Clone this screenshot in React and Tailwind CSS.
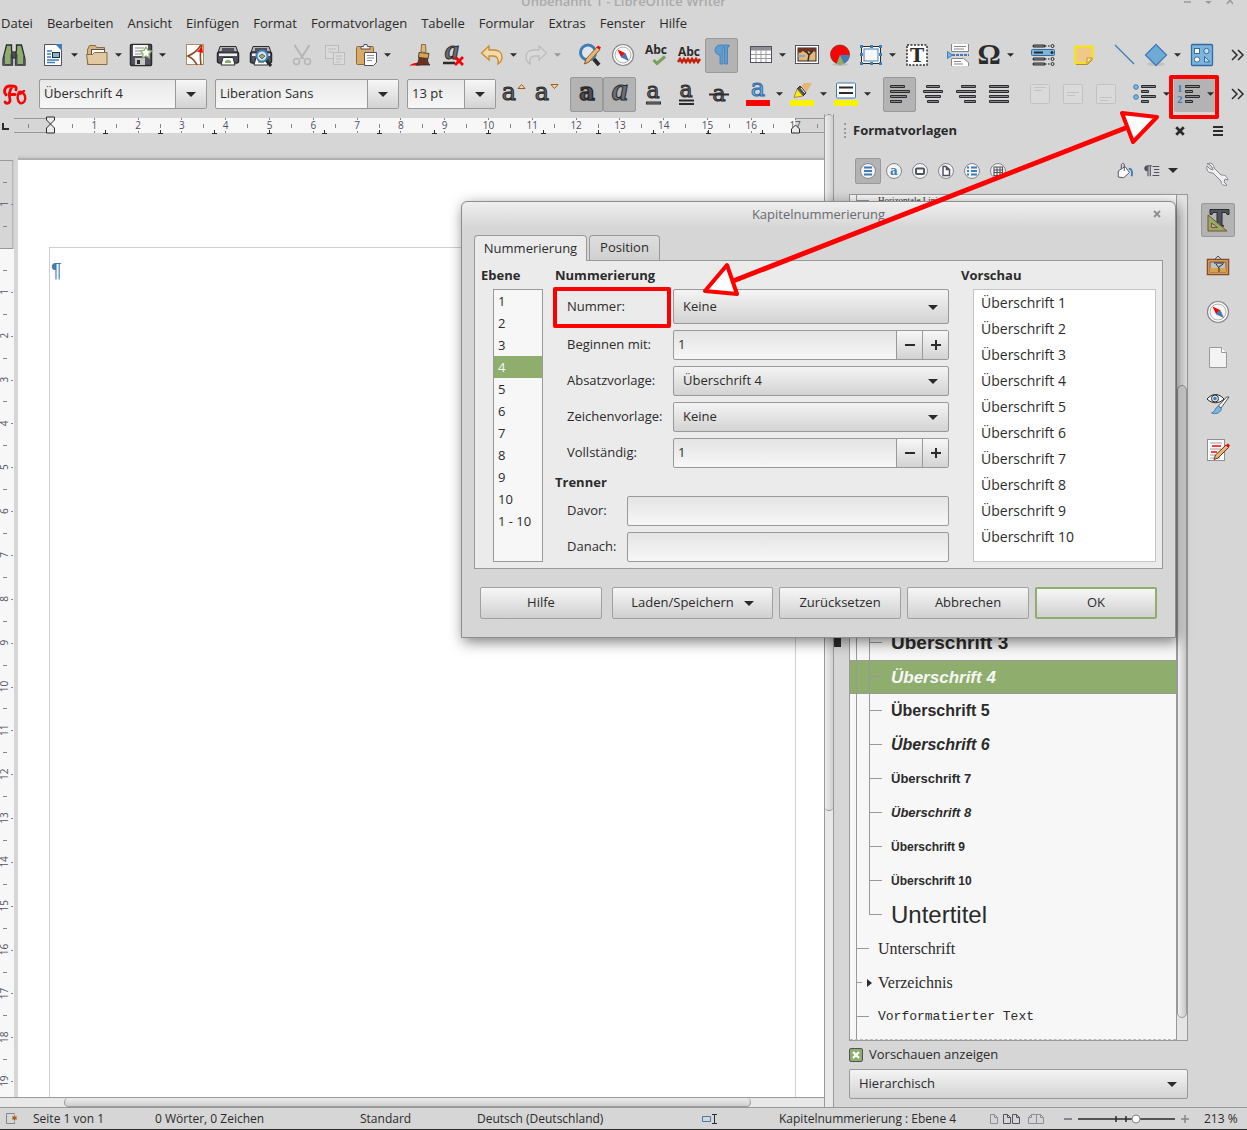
import React, { useState } from 'react'
import clsx from 'clsx'

const MENU = ['Datei', 'Bearbeiten', 'Ansicht', 'Einfügen', 'Format', 'Formatvorlagen', 'Tabelle', 'Formular', 'Extras', 'Fenster', 'Hilfe']

const STANDARD_BAR = [
  { icon: 'binoculars', label: 'Suchen' },
  'sep',
  { icon: 'newDoc', label: 'Neu', menu: true },
  { icon: 'folder', label: 'Öffnen', menu: true },
  { icon: 'save', label: 'Speichern', menu: true },
  'sep',
  { icon: 'pdf', label: 'Als PDF exportieren' },
  { icon: 'print', label: 'Drucken' },
  { icon: 'printPreview', label: 'Druckvorschau' },
  'sep',
  { icon: 'cut', label: 'Ausschneiden' },
  { icon: 'copy', label: 'Kopieren' },
  { icon: 'paste', label: 'Einfügen', menu: true },
  'sep',
  { icon: 'brush', label: 'Format übertragen' },
  { icon: 'clearFormat', label: 'Direkte Formatierung löschen' },
  'sep',
  { icon: 'undo', label: 'Rückgängig', menu: true },
  { icon: 'redo', label: 'Wiederherstellen', menu: true, disabled: true },
  'sep',
  { icon: 'find', label: 'Suchen und Ersetzen' },
  { icon: 'compass', label: 'Navigator' },
  { icon: 'spell', label: 'Rechtschreibung' },
  { icon: 'autoSpell', label: 'Automatische Rechtschreibprüfung' },
  { icon: 'pilcrow', label: 'Formatierungszeichen', pressed: true },
  'sep',
  { icon: 'table', label: 'Tabelle', menu: true },
  { icon: 'image', label: 'Bild' },
  { icon: 'chart', label: 'Diagramm' },
  { icon: 'frame', label: 'Rahmen', menu: true },
  { icon: 'textBox', label: 'Textfeld' },
  'sep',
  { icon: 'pageBreak', label: 'Seitenumbruch' },
  { icon: 'omega', label: 'Sonderzeichen', menu: true },
  'sep',
  { icon: 'field', label: 'Feldbefehl' },
  'sep',
  { icon: 'note', label: 'Kommentar' },
  'sep',
  { icon: 'line', label: 'Linie' },
  { icon: 'diamond', label: 'Standardformen', menu: true },
  { icon: 'shapes', label: 'Zeichenfunktionen' },
]

const FORMAT_BAR = [
  { icon: 'grow', label: 'Schrift vergrößern' },
  { icon: 'shrink', label: 'Schrift verkleinern' },
  'sep',
  { icon: 'bold', label: 'Fett', pressed: true },
  { icon: 'italic', label: 'Kursiv', pressed: true },
  { icon: 'underline', label: 'Unterstrichen' },
  { icon: 'doubleUnderline', label: 'Doppelt unterstrichen' },
  { icon: 'strike', label: 'Durchgestrichen' },
  'sep',
  { icon: 'fontColor', label: 'Zeichenfarbe', menu: true },
  { icon: 'highlight', label: 'Hervorhebungsfarbe', menu: true },
  { icon: 'paraColor', label: 'Absatzhintergrund', menu: true },
  'sep',
  { icon: 'alignLeft', label: 'Linksbündig', pressed: true },
  { icon: 'alignCenter', label: 'Zentriert' },
  { icon: 'alignRight', label: 'Rechtsbündig' },
  { icon: 'justify', label: 'Blocksatz' },
  'sep',
  { icon: 'top', label: 'Oben', disabled: true },
  { icon: 'middle', label: 'Mitte', disabled: true },
  { icon: 'bottom', label: 'Unten', disabled: true },
  'sep',
  { icon: 'bullets', label: 'Aufzählung', menu: true },
  { icon: 'numbering', label: 'Nummerierung', menu: true, pressed: true },
]

const ink = '#2b2b2b'
const slate = '#50525f'
const serif = 'DejaVu Serif, serif'

const printer = (
  <g>
    <path d="M4 3.500h16l2 6H2z" fill="#b5b5b9" stroke={ink} />
    <rect x="6" y="5" width="12" height="3" fill={slate} />
    <rect x="1.500" y="9" width="21" height="11" rx="2" fill="#50525f" stroke={ink} strokeWidth="1.500" />
    <rect x="3" y="10.500" width="18" height="2.500" fill="#f0f0f0" />
    <path d="M7 14.500h10l2 7.500H5z" fill="#fff" stroke={ink} />
    <path d="M9 18l3-1.500 3 1.500v2H9z" fill="#8fae6e" />
  </g>
)

const bars = (rows) => rows.map(([x, w], i) => (
  <g key={i}>
    <rect x={x} y={3 + i * 5} width={w} height="3" rx="1" fill={ink} />
    <rect x={x + 1} y={4 + i * 5} width={w - 2} height="1" fill="#85858d" />
  </g>
))

const letterA = (props) => (
  <text x="12" y="18" textAnchor="middle" fontFamily={serif} fontSize="22" fill="#6c6e7a" stroke={ink} strokeWidth="1" {...props}>a</text>
)

const compass = (
  <g>
    <circle cx="12" cy="12" r="10.500" fill="#fff" stroke="#85858d" strokeWidth="1.200" />
    <circle cx="12" cy="12" r="8" fill="#f7f7f7" stroke="#b0b0b0" />
    <path d="M6.500 6.500l7.500 3.500-4 4z" fill="#f40606" />
    <path d="M17.500 17.500l-7.500-3.500 4-4z" fill="#3f7cb8" stroke={slate} strokeWidth="0.500" />
  </g>
)

const disabledBox = (y, w) => (
  <g fill="none" stroke="#c2c2c2">
    <rect x="2.500" y="2.500" width="19" height="19" rx="1" fill="#dadada" />
    <path d={`M6 ${y}.5h${w}M6 ${y + 3}.5h${w - 4}`} />
  </g>
)

const ICONS = {
  binoculars: (
    <g stroke={ink}>
      <path d="M4.500 2h5v5l1 4v11H1V16z" fill="#8fae6e" strokeWidth="1.300" />
      <path d="M19.500 2h-5v5l-1 4v11H23V16z" fill="#8fae6e" strokeWidth="1.300" />
      <path d="M1 17l2-6v11H1zM23 17l-2-6v11h2zM8.500 11h2v11h-2zM13.500 11h2v11h-2z" fill={slate} stroke="none" />
      <rect x="10" y="9" width="4" height="6" fill={slate} />
    </g>
  ),
  newDoc: (
    <g>
      <path d="M3.500 1.500h12l5 5v16h-17z" fill="#fff" stroke={slate} />
      <path d="M14 1h7v7z" fill="#3f7cb8" />
      <path d="M6 8h5M6 11h4M6 14h4M6 17h12M6 19.500h8" stroke="#3f7cb8" strokeWidth="1.500" />
      <rect x="11.500" y="9.500" width="7" height="5" fill="#7fb5da" stroke={ink} />
    </g>
  ),
  folder: (
    <g stroke="#8a6a45">
      <path d="M2.500 6.500l2-4h6l1 2h8v17h-17z" fill="#d9b27a" />
      <rect x="6.500" y="6.500" width="13" height="8" fill="#fff" stroke={slate} />
      <path d="M1.500 11.500h6l2-2h12.500v12h-19z" fill="#e3c9a2" />
    </g>
  ),
  save: (
    <g>
      <rect x="1.500" y="1.500" width="21" height="21" rx="1" fill="#50525f" stroke={ink} strokeWidth="1.500" />
      <rect x="4" y="2" width="15" height="11" fill="#f7f7f7" />
      <path d="M6 5h9M6 8h8M6 11h7" stroke="#8e8e96" />
      <rect x="6" y="15" width="10" height="7" fill="#c6c6ca" />
      <rect x="8" y="17" width="3" height="4" fill={ink} />
      <path d="M17 4l2 3.500 3.500.5-2.500 3 .5 4-3.500-2-3.500 2 .5-4-2.500-3 3.500-.5z" fill="#fff" stroke="#8fae6e" strokeWidth="1.300" />
    </g>
  ),
  pdf: (
    <g fill="none">
      <rect x="3.500" y="1.500" width="17" height="20" fill="#fff" stroke="#b98a60" />
      <path d="M18 2c-3 5-8 9-13 11 4 2 7 5 9 9" stroke="#8a4a25" strokeWidth="1.600" />
      <path d="M19 2c-2 6-2 13-1 20" stroke="#8a4a25" strokeWidth="1.600" />
      <path d="M14 9c2-2 4-4 5-7l1 8c-2-1-4-1-6-1z" fill="#f40606" />
    </g>
  ),
  print: printer,
  printPreview: (
    <g>
      {printer}
      <path d="M17 17l5 6" stroke={ink} strokeWidth="3" />
      <circle cx="13" cy="13" r="5.500" fill="#dbe7f0" stroke="#3f7cb8" strokeWidth="2" />
      <path d="M10 13l3-2 3 2-3 3z" fill="#8fae6e" stroke={ink} strokeWidth="0.600" />
    </g>
  ),
  cut: (
    <g fill="none" stroke="#b5b5b5" strokeWidth="1.500">
      <path d="M4.500 2l9 14M19.500 2l-9 14" strokeWidth="2" />
      <circle cx="6.500" cy="18.500" r="3" />
      <circle cx="17.500" cy="18.500" r="3" />
    </g>
  ),
  copy: (
    <g fill="#dadada" stroke="#bcbcbc">
      <rect x="2.500" y="2.500" width="13" height="13" />
      <rect x="10.500" y="9.500" width="11" height="12" />
      <path d="M5 6h8M5 9h5M13 13h6M13 16h6M13 19h4" />
    </g>
  ),
  paste: (
    <g>
      <rect x="2.500" y="3.500" width="17" height="18" rx="1" fill="#dca963" stroke="#8a6a45" />
      <path d="M7 6V3.500h2.500L10 1.500h3l.5 2H16V6z" fill="#f0f0f0" stroke={slate} />
      <path d="M10.500 9.500h12v10l-3 3h-9z" fill="#fff" stroke={slate} />
      <path d="M13 12.500h7M13 15h7M13 17.500h5" stroke="#8e8e96" />
    </g>
  ),
  brush: (
    <g>
      <path d="M1 22.500c5-3 8-3 10-2.500h4l-3 2.500z" fill="#f40606" />
      <path d="M11 14l9 1c-1 3 0 5 2 7H8c2-2 3-5 3-8z" fill="#6e3220" stroke={ink} strokeWidth="0.800" />
      <path d="M11 9.500l10 1-1 5-9.500-1z" fill="#d9a24e" stroke={ink} strokeWidth="0.800" />
      <path d="M13.500 1.500h4l.5 8-5-.5z" fill="#e2b777" stroke="#8a6a45" />
    </g>
  ),
  clearFormat: (
    <g>
      {letterA({ fontStyle: 'italic', fontFamily: 'Liberation Serif, serif', fontWeight: 'bold', fontSize: 28, x: 11, y: 16 })}
      <path d="M2 20h12" stroke={ink} strokeWidth="2.500" />
      <path d="M14 14l8 8M22 14l-8 8" stroke="#f40606" strokeWidth="2.800" />
    </g>
  ),
  undo: <path d="M9 3v4h5c5 0 8 3 8 7 0 3-1 5-4 7 1-5-1-8-5-8H9v4L1.500 10z" fill="#f3d9ac" stroke="#c98a2c" strokeWidth="1.300" />,
  redo: <path d="M15 3v4h-5c-5 0-8 3-8 7 0 3 1 5 4 7-1-5 1-8 5-8h4v4l7.500-7z" fill="#d9d9d9" stroke="#bcbcbc" strokeWidth="1.300" />,
  find: (
    <g>
      <path d="M15 15l6 7" stroke={ink} strokeWidth="4" />
      <circle cx="10" cy="9.500" r="7.500" fill="#dfe6ec" stroke="#3f7cb8" strokeWidth="3" />
      <path d="M19 4l3 2.500L11 19l-4.500 2L8 16z" fill="#e2b777" stroke="#8a5a2a" />
      <path d="M18.500 4.500l1.500-2 3 2-1.500 2z" fill="#f40606" />
    </g>
  ),
  compass,
  spell: (
    <g>
      <text x="12" y="11" textAnchor="middle" fontFamily="Open Sans, sans-serif" fontSize="12" fontWeight="bold" fill={ink}>Abc</text>
      <path d="M9.500 17l3.500 3.500 8-7" fill="none" stroke="#7a9f57" strokeWidth="3" />
    </g>
  ),
  autoSpell: (
    <g>
      <text x="12" y="13" textAnchor="middle" fontFamily="Open Sans, sans-serif" fontSize="12" fontWeight="bold" fill={ink}>Abc</text>
      <path d="M1 19l2-3 2 3 2-3 2 3 2-3 2 3 2-3 2 3 2-3 2 3 2-3" fill="none" stroke="#c4200c" strokeWidth="2.500" />
    </g>
  ),
  pilcrow: (
    <path d="M10 2h9v2h-1.500v17h-3V4h-1.500v17h-3v-9a5 5 0 0 1 0-10z" fill="#5f9dce" stroke="#3f7cb8" strokeWidth="0.800" />
  ),
  table: (
    <g>
      <rect x="1.500" y="3.500" width="21" height="16" fill="#fff" stroke={slate} />
      <rect x="2" y="4" width="20" height="3.500" fill="#8e8e96" />
      <path d="M2 11.500h20M2 15.500h20M7 7v12M12 7v12M17 7v12" stroke="#9a9aa2" />
    </g>
  ),
  image: (
    <g>
      <rect x="0.500" y="2.500" width="23" height="18" fill="#fff" stroke={slate} />
      <rect x="3" y="5" width="18" height="13" fill="#e2b777" stroke={ink} />
      <path d="M3 5h18v4l-3-1-2 2-3-2-2 2-3-2-3 2-2-1z" fill="#6e3220" />
      <path d="M13 18l1-6-3-4M14 12l4-4" stroke={ink} fill="none" strokeWidth="1.500" />
      <path d="M3 12h7v2H3z" fill="#85a9bd" />
    </g>
  ),
  chart: (
    <g>
      <ellipse cx="12" cy="21.500" rx="8" ry="1.500" fill="#bdbdbd" />
      <circle cx="12" cy="11.500" r="9.500" fill="#f40606" stroke="#9a2410" strokeWidth="0.800" />
      <path d="M12 12l9.500 0a9.500 9.500 0 0 1-6 8.700z" fill="#3f7cb8" />
      <path d="M12 12l4 8.700a9.500 9.500 0 0 1-7.500 0z" fill="#8fae6e" />
    </g>
  ),
  frame: (
    <g>
      <rect x="2.500" y="3.500" width="19" height="17" fill="#fff" stroke={ink} />
      <rect x="5" y="6" width="14" height="12" fill="#f7f7f7" stroke="#3f7cb8" />
      <g fill="#3f7cb8">
        <rect x="1" y="2" width="3" height="3" /><rect x="11" y="2" width="3" height="3" /><rect x="20" y="2" width="3" height="3" />
        <rect x="1" y="10" width="3" height="3" /><rect x="20" y="10" width="3" height="3" />
        <rect x="1" y="19" width="3" height="3" /><rect x="11" y="19" width="3" height="3" /><rect x="20" y="19" width="3" height="3" />
      </g>
    </g>
  ),
  textBox: (
    <g>
      <rect x="2" y="2" width="20" height="20" fill="#fff" stroke={ink} strokeWidth="1.500" strokeDasharray="2 1.500" />
      <text x="12" y="19" textAnchor="middle" fontFamily={serif} fontSize="19" fontWeight="bold" fill={ink}>T</text>
    </g>
  ),
  pageBreak: (
    <g>
      <path d="M5.500 1v7.500h17V1" fill="#fff" stroke="#85858d" />
      <path d="M8 3.500h12M8 6h10" stroke="#85858d" />
      <path d="M6 12h17" stroke="#3f7cb8" strokeWidth="2" strokeDasharray="3 1" />
      <path d="M1.500 8.500v7l5-3.500z" fill="#7fb5da" stroke="#3f7cb8" />
      <path d="M5.500 23v-7.500h12l5 4V23" fill="#fff" stroke="#85858d" />
      <path d="M8 18.500h7M8 21h9" stroke="#85858d" />
    </g>
  ),
  omega: <text x="12" y="21" textAnchor="middle" fontFamily="Liberation Serif, serif" fontSize="29" fontWeight="bold" fill={ink}>Ω</text>,
  field: (
    <g>
      <path d="M3 3h10M3 16h10M3 21h10" stroke={ink} strokeWidth="3" strokeLinecap="round" />
      <path d="M3 3h10M3 16h10M3 21h10" stroke="#b0b0b0" strokeWidth="0.800" />
      <path d="M14 3h6M14 16h6M14 21h6" stroke={slate} strokeWidth="1.500" strokeDasharray="1.500 1.500" />
      <g fill="none" stroke={ink}>
        <circle cx="21.500" cy="3" r="1.500" /><circle cx="21.500" cy="16" r="1.500" /><circle cx="21.500" cy="21" r="1.500" />
      </g>
      <rect x="0.500" y="6.500" width="23" height="6" rx="1" fill="#7fb5da" stroke="#2f6ba6" />
      <path d="M3 9.500h9" stroke={ink} strokeWidth="2" />
      <circle cx="21" cy="9.500" r="1.500" fill={ink} />
    </g>
  ),
  note: (
    <g>
      <path d="M3.500 3.500h17v12l-5 5h-12z" fill="#f0c98a" stroke="#f5e800" strokeWidth="2" />
      <path d="M4 21.500h11.500l5-5" fill="none" stroke="#b98a30" />
      <path d="M15 20.500v-5.500h5.500z" fill="#fff3b0" stroke="#c98a2c" />
    </g>
  ),
  line: <path d="M2 2l19 19" stroke="#3f7cb8" strokeWidth="1.200" />,
  diamond: (
    <g>
      <ellipse cx="12" cy="21" rx="9" ry="2" fill="#c2c2c2" />
      <path d="M12 1.500L22.500 12 12 22.500 1.500 12z" fill="#6faad6" stroke="#3f7cb8" strokeWidth="1.300" />
    </g>
  ),
  shapes: (
    <g stroke="#2f6ba6">
      <rect x="1.500" y="1.500" width="21" height="21" rx="1" fill="#7fb5da" strokeWidth="1.300" />
      <rect x="4.500" y="5.500" width="5" height="5" fill="#fff" />
      <circle cx="16.500" cy="8" r="2.700" fill="#c9dfef" />
      <circle cx="7" cy="16.500" r="2.700" fill="#fff" />
      <path d="M14.500 13.500v5.500h5.500z" fill="#c9dfef" />
    </g>
  ),
  chapter: (
    <g fill="none" stroke="#f40606" strokeWidth="2.800" strokeLinecap="round">
      <path d="M3 13C0 9 2 4 7 4s7 0 6 4M9 5C6 9 6 14 7 18c0 4-4 4-5 2M6 12.500h6" />
      <path d="M16 10c-2 3-2 9 1 11 4 1 6-3 5-7-1-3-4-5-6-4zM17 12l4-3" strokeWidth="2.400" />
    </g>
  ),
  grow: (
    <g>
      {letterA({ x: 8, fontSize: 24 })}
      <path d="M17 6.500l3.500-4 3.500 4z" fill="#f3d9ac" stroke="#a0561c" />
    </g>
  ),
  shrink: (
    <g>
      {letterA({ x: 8, fontSize: 24 })}
      <path d="M17 2.500l3.500 4 3.500-4z" fill="#f3d9ac" stroke="#a0561c" />
    </g>
  ),
  bold: letterA({ fontSize: 24, strokeWidth: 1.5, fontWeight: 'bold', fill: slate }),
  italic: letterA({ fontSize: 32, fontStyle: 'italic', fontFamily: 'Liberation Serif, serif', fontWeight: 'bold' }),
  underline: (
    <g>
      {letterA({ y: 16 })}
      <path d="M5 21h15" stroke={ink} strokeWidth="3" /><path d="M6 21h13" stroke="#85858d" />
    </g>
  ),
  doubleUnderline: (
    <g>
      {letterA({ y: 15 })}
      <path d="M5 18.500h15M5 22h15" stroke={ink} strokeWidth="2" />
    </g>
  ),
  strike: (
    <g>
      {letterA({ y: 19 })}
      <path d="M2 12.500h20" stroke={ink} strokeWidth="2" />
    </g>
  ),
  fontColor: (
    <g>
      {letterA({ y: 14, fontSize: 24, fill: '#7fb5da', stroke: '#2f6ba6' })}
      <rect x="0" y="18" width="24" height="6" fill="#f40606" />
    </g>
  ),
  highlight: (
    <g>
      <path d="M14 1h8l-6 10-5-6z" fill="#e2b777" />
      <path d="M10 4l6 7-3 3-6-7z" fill={slate} stroke={ink} />
      <path d="M11 6l4 5" stroke="#f7f7f7" />
      <path d="M7 7l6 7-9 1.500z" fill="#f5ee1a" stroke="#b98a30" />
      <rect x="0" y="18" width="24" height="6" fill="#f8f400" />
    </g>
  ),
  paraColor: (
    <g>
      <rect x="2.500" y="1" width="19" height="15" rx="1" fill="#fff" stroke="#3f7cb8" />
      <path d="M5 5.500h14M5 11h14" stroke={ink} strokeWidth="2" />
      <rect x="0" y="18" width="24" height="6" fill="#f8f400" />
    </g>
  ),
  alignLeft: bars([[2, 15], [2, 20], [2, 17], [2, 12]]),
  alignCenter: bars([[5, 14], [2, 20], [4, 16], [6, 12]]),
  alignRight: bars([[7, 15], [2, 20], [5, 17], [10, 12]]),
  justify: bars([[2, 20], [2, 20], [2, 20], [2, 20]]),
  top: disabledBox(5, 12),
  middle: disabledBox(10, 12),
  bottom: disabledBox(15, 12),
  bullets: (
    <g>
      <circle cx="3" cy="5" r="2.300" fill="#7fb5da" stroke="#3f7cb8" />
      <circle cx="3" cy="15" r="2.300" fill="#7fb5da" stroke="#3f7cb8" />
      {bars([[8, 15], [8, 8], [8, 15], [8, 8]])}
    </g>
  ),
  numbering: (
    <g>
      <g fontFamily="Liberation Serif, serif" fontSize="11" fontWeight="bold" fill="#3f7cb8">
        <text x="0" y="10">1</text>
        <text x="0" y="21">2</text>
      </g>
      {bars([[8, 15], [8, 8], [8, 15], [8, 8]])}
    </g>
  ),
  wrench: <path d="M3 2l3 3 1 3-3-1-3-3c-1 4 1 7 6 7l8 8c0 4 3 5 6 4l-3-3 1-3 3 1c-1-4-3-5-7-5l-7-7c0-4-3-6-7-4z" fill="#f0f0f0" stroke="#85858d" />,
  stylesTab: (
    <g>
      <path d="M4 1.500h19v5h-2l-1-2h-4V17l2 1h-9l2-1V4.500H7l-1 2H4z" fill={slate} stroke={ink} />
      <path d="M2 7v16h19z" fill="#8fae6e" stroke="#8a4a25" />
      <path d="M5.500 15v4.500h6z" fill="#b3b3b3" stroke="#8a4a25" />
    </g>
  ),
  gallery: (
    <g>
      <path d="M8 6l4-4 4 4" fill="none" stroke={slate} />
      <rect x="1.500" y="5.500" width="21" height="15" fill="#e2b777" stroke="#8a4a25" strokeWidth="1.500" />
      <rect x="4" y="8" width="16" height="10" fill="#b9c4cb" stroke="#8a4a25" />
      <path d="M4 14h16v4H4z" fill="#d9a24e" />
      <path d="M13 18v-4l-3-4M13 13l4-3M8 9h10" stroke={ink} fill="none" />
    </g>
  ),
  pageTab: (
    <g>
      <path d="M3.500 1.500h12l5 5v15h-17z" fill="#f3f3f3" stroke="#9a9a9a" />
      <path d="M15.500 1.500v5h5" fill="#fff" stroke="#9a9a9a" />
    </g>
  ),
  inspect: (
    <g>
      <path d="M1 7c5-6 12-6 17 0-5 5-12 5-17 0z" fill="#f7f7f7" stroke={ink} />
      <circle cx="9" cy="6.500" r="3.500" fill="#dbe7f0" stroke={ink} />
      <circle cx="9" cy="6.500" r="1.800" fill="#3f7cb8" />
      <path d="M23 5l-8 11-2.500-2 8-9z" fill="#fff" stroke={ink} strokeWidth="0.800" />
      <path d="M12.500 14l3 3c-2 5-6 5-10 4 4-1 3-5 7-7z" fill="#7fb5da" stroke="#3f7cb8" />
    </g>
  ),
  changes: (
    <g>
      <rect x="1.500" y="1.500" width="17" height="21" fill="#fff" stroke="#8e8e96" />
      <path d="M4 5h12M4 11h11M4 17h8M4 20h10" stroke="#9a9aa2" />
      <path d="M6 8h9M5 14h6" stroke="#f40606" strokeWidth="1.500" />
      <path d="M20 7l2.500 2.500L12 20l-4 1.500L9.500 17z" fill="#e2b777" stroke="#6e3220" />
      <path d="M20 7l2-1.500 2 2-1.500 2z" fill="#f40606" />
    </g>
  ),
  fill: (
    <g fill="none" stroke={slate} strokeWidth="1.300">
      <path d="M3 12l9-6 6 8-8 7-7-1z" fill="#fff" />
      <path d="M7 9V4c1-3 4-3 4 0v8" />
      <path d="M17 9c4 0 5 3 4 10" stroke="#3f7cb8" strokeWidth="2.500" />
    </g>
  ),
  newStyle: (
    <g stroke={slate}>
      <path d="M7 5h6M8 5v14M11 5v14" strokeWidth="1.500" fill="none" />
      <path d="M7 5a3.500 3.500 0 0 0 0 7z" fill={slate} />
      <path d="M14 6h9M16 10h7M16 14h7M14 18h9" strokeWidth="1.500" />
    </g>
  ),
}

const Icon = ({ name, className = 'size-6' }) => (
  <svg viewBox="0 0 24 24" className={clsx('shrink-0 overflow-visible', className)} aria-hidden="true">{ICONS[name]}</svg>
)

const Caret = ({ className = 'h-[5px] w-2.5' }) => (
  <svg viewBox="0 0 10 5" className={clsx('shrink-0', className)} aria-hidden="true">
    <path d="M0 0h10L5 5z" fill="currentColor" />
  </svg>
)

const Chevrons = () => (
  <button aria-label="Weitere Symbole" className="ml-auto mr-0.5 shrink-0">
    <svg viewBox="0 0 14 12" className="h-3 w-3.5" aria-hidden="true">
      <path d="M1 1l5 5-5 5M7 1l5 5-5 5" fill="none" stroke="#2b2b2b" strokeWidth="1.500" />
    </svg>
  </button>
)

const pressedClass = 'rounded-xs border-[#999] bg-[#b3b3b3]'

const Tool = ({ item }) => {
  if (item === 'sep') return <span className="w-2 shrink-0" />
  if (!item.menu) {
    return (
      <button
        aria-label={item.label}
        disabled={item.disabled}
        className={clsx('flex h-[35px] w-[33px] shrink-0 items-center justify-center border', item.pressed ? pressedClass : 'border-transparent')}
      >
        <Icon name={item.icon} />
      </button>
    )
  }
  return (
    <div className={clsx('flex h-[35px] shrink-0', item.pressed && 'rounded-xs bg-[#b3b3b3]')}>
      <button aria-label={item.label} disabled={item.disabled} className="flex w-[29px] items-center justify-center">
        <Icon name={item.icon} />
      </button>
      <button aria-label={`${item.label} Optionen`} disabled={item.disabled} className="flex w-[15px] items-center justify-center disabled:text-[#999]">
        <Caret className="h-1 w-[7px]" />
      </button>
    </div>
  )
}

const Combo = ({ label, value, className }) => (
  <div className={clsx('flex h-[30px] shrink-0 rounded-xs border border-[#999] bg-linear-to-b from-[#e8e8e8] to-[#f7f7f7]', className)}>
    <input aria-label={label} defaultValue={value} className="min-w-0 flex-1 px-1 text-[13px] outline-none" />
    <button aria-label={`${label} auswählen`} className="flex w-[31px] items-center justify-center border-l border-[#999] bg-linear-to-b from-[#f7f7f7] to-[#d3d3d3]">
      <Caret />
    </button>
  </div>
)

const HorizontalRuler = () => {
  const cm = 43.8
  const marks = Array.from({ length: 17 }, (_, i) => i + 1)
  return (
    <svg className="h-5 w-full shrink-0" aria-label="Lineal">
      <path d="M3 9v6h6" fill="none" stroke={ink} strokeWidth="2" />
      <path d="M14 4.500h812M14 18.500h812" stroke="#999" />
      <rect x="50" y="4" width="745" height="15" fill="#f7f7f7" />
      <path d="M28.500 10v4M817.500 10v4" stroke="#85858d" />
      {marks.map((n) => (
        <g key={n}>
          <path d={`M${Math.round(50 + n * cm)}.5 4v2m0 11v2M${Math.round(50 + (n - 0.5) * cm)}.5 10v4`} stroke="#85858d" />
          <text x={50.5 + n * cm} y="15" textAnchor="middle" fontSize="10" fill={slate}>{n}</text>
        </g>
      ))}
      {Array.from({ length: 13 }, (_, i) => Math.round(50 + (i + 1) * 54.8)).map((x) => (
        <path key={x} d={`M${x - 2} 19.500h5M${x}.5 16v3`} stroke={ink} />
      ))}
      <path d="M46.500 4v-1h8v3l-4 4-4-4zM50.500 10l4 4v5h-8v-5z" fill="#ebebeb" stroke={ink} />
      <path d="M795.500 11l4 4v4h-8v-4z" fill="#ebebeb" stroke={ink} />
    </svg>
  )
}

const VerticalRuler = () => {
  const cm = 43.85
  return (
    <svg className="h-full w-3.5 shrink-0 bg-[#f7f7f7]" aria-label="Vertikales Lineal">
      <rect x="-1" y="0.500" width="14" height="88" fill="#d6d6d6" stroke="#999" />
      <path d="M3 22.500h4M3 66.500h4M11 44.500h2" stroke="#85858d" />
      <text transform="translate(8 44) rotate(-90)" textAnchor="middle" fontSize="10" fill={slate}>1</text>
      {Array.from({ length: 19 }, (_, i) => i + 1).map((n) => (
        <g key={n}>
          <path d={`M11 ${Math.round(88 + n * cm)}.5h2M3 ${Math.round(88 + (n - 0.5) * cm)}.5h4`} stroke="#85858d" />
          <text transform={`translate(8 ${88 + n * cm}) rotate(-90)`} textAnchor="middle" fontSize="10" fill={slate}>{n}</text>
        </g>
      ))}
    </svg>
  )
}

const STYLES = [
  { name: 'Überschrift 3', sub: true, className: 'font-bold text-[19px]' },
  { name: 'Überschrift 4', sub: true, className: 'font-bold italic text-[17px]' },
  { name: 'Überschrift 5', sub: true, className: 'font-bold text-[16px]' },
  { name: 'Überschrift 6', sub: true, className: 'font-bold italic text-[16px]' },
  { name: 'Überschrift 7', sub: true, className: 'font-bold text-[13px]' },
  { name: 'Überschrift 8', sub: true, className: 'font-bold italic text-[13px]' },
  { name: 'Überschrift 9', sub: true, className: 'font-bold text-[12px]' },
  { name: 'Überschrift 10', sub: true, className: 'font-bold text-[12px]' },
  { name: 'Untertitel', sub: true, last: true, className: 'text-[24px]' },
  { name: 'Unterschrift', className: "font-['Liberation_Serif',serif] text-[16px]" },
  { name: 'Verzeichnis', expandable: true, className: "font-['Liberation_Serif',serif] text-[16px]" },
  { name: 'Vorformatierter Text', className: "font-['Liberation_Mono',monospace] text-[13px]" },
]

const StyleRow = ({ style, selected, onSelect }) => (
  <li
    onClick={onSelect}
    className={clsx(
      "flex h-[34px] shrink-0 pl-1.5 font-['Liberation_Sans',sans-serif] leading-[34px]",
      selected ? 'border-y border-[#999] bg-[#8fae6e] leading-8 text-[#f7f7f7]' : 'text-[#2b2b2b]'
    )}
  >
    {style.sub && <span className="w-[13px] border-l border-[#999]" />}
    <span className="flex w-[13px] flex-col">
      <span className={clsx('h-1/2 border-b border-l border-[#999]', style.expandable && 'w-1.5')} />
      {!style.last && <span className="h-1/2 border-l border-[#999]" />}
    </span>
    {style.expandable ? (
      <span className="flex w-[9px] items-center">
        <svg viewBox="0 0 5 8" className="-ml-0.5 h-2 w-[5px]" aria-hidden="true"><path d="M0 0l5 4-5 4z" fill={ink} /></svg>
      </span>
    ) : (
      <span className="w-[9px]" />
    )}
    <span className={style.className}>{style.name}</span>
  </li>
)

// round buttons that switch between the style families
const FAMILIES = [
  { label: 'Absatzvorlagen', glyph: <path d="M8 8.500h8M8 12h8M8 15.500h8" stroke="#3f7cb8" strokeWidth="2" /> },
  { label: 'Zeichenvorlagen', glyph: <text x="12" y="16" textAnchor="middle" fontFamily={serif} fontSize="12" fontWeight="bold" fill="#3f7cb8">a</text> },
  { label: 'Rahmenvorlagen', glyph: <rect x="8" y="9.500" width="8" height="5.500" rx="1" fill="#fff" stroke={slate} strokeWidth="2" /> },
  { label: 'Seitenvorlagen', glyph: <path d="M9 7.500h3l3.500 3v6H9zM12.500 7.500v3h3" fill="#fff" stroke={slate} strokeWidth="1.500" /> },
  { label: 'Listenvorlagen', glyph: <path d="M7 8.500h2M7 12h2M7 15.500h2M11 8.500h6M11 12h6M11 15.500h6" stroke="#3f7cb8" strokeWidth="2" /> },
  { label: 'Tabellenvorlagen', glyph: <path d="M8 8h8.500v8.500H8zM8 11h8.500M8 13.500h8.500M11 8v8.500M14 8v8.500" fill="#fff" stroke={slate} strokeWidth="1.200" /> },
]

const TABS = [
  ['wrench', 'Eigenschaften'],
  ['stylesTab', 'Formatvorlagen'],
  ['gallery', 'Galerie'],
  ['compass', 'Navigator'],
  ['pageTab', 'Seite'],
  ['inspect', 'Stil-Inspektor'],
  ['changes', 'Änderungen verwalten'],
]

const Select = ({ id, label, options, className }) => (
  <div className={clsx('relative', className)}>
    <select
      id={id}
      aria-label={label}
      className="size-full appearance-none rounded-xs border border-[#999] bg-linear-to-b from-[#f4f4f4] to-[#d3d3d3] px-[9px] text-[13px] outline-none"
    >
      {options.map((o) => <option key={o}>{o}</option>)}
    </select>
    <Caret className="pointer-events-none absolute right-[11px] top-1/2 -mt-0.5 h-[5px] w-2.5" />
  </div>
)

const Sidebar = () => {
  const [selected, setSelected] = useState('Überschrift 4')
  return (
    <aside className="flex w-[413px] shrink-0">
      <div className="w-[7px] pt-[524px]">
        <button aria-label="Seitenleiste ausblenden" className="block h-[9px] w-[7px] bg-[#2b2b2b]" />
      </div>
      <div className="flex min-w-0 flex-1 flex-col">
        <header className="flex h-[33px] shrink-0 items-center pl-[3px]">
          <span className="h-[15px] border-l-2 border-dotted border-[#999]" />
          <h2 className="ml-[7px] text-[13px] font-bold">Formatvorlagen</h2>
          <button aria-label="Schließen" className="ml-auto p-[3px]">
            <svg viewBox="0 0 8 8" className="size-2.5" aria-hidden="true"><path d="M1 1l6 6M7 1L1 7" stroke={ink} strokeWidth="2.200" /></svg>
          </button>
        </header>
        <div className="flex h-[47px] shrink-0 items-center pl-3.5">
          {FAMILIES.map((f, i) => (
            <button key={f.label} aria-label={f.label} className={clsx('flex size-[26px] items-center justify-center border', i === 0 ? pressedClass : 'border-transparent')}>
              <svg viewBox="0 0 24 24" className="size-6 shrink-0 overflow-visible" aria-hidden="true">
                <circle cx="12" cy="12" r="7.500" fill="#f3f3f3" stroke="#85858d" />
                {f.glyph}
              </svg>
            </button>
          ))}
          <button aria-label="Gießkannenmodus" className="ml-auto mr-2"><Icon name="fill" className="size-[18px]" /></button>
          <button aria-label="Neue Vorlage" className="mr-2"><Icon name="newStyle" className="size-[18px]" /></button>
          <button aria-label="Vorlagen Aktionen" className="mr-2.5"><Caret /></button>
        </div>
        <div className="ml-2 flex min-h-0 flex-1 border border-[#999] bg-[#f7f7f7]">
          <ul className="flex min-w-0 flex-1 flex-col overflow-hidden">
            <li className="flex shrink-0 pl-1.5">
              <span className="flex h-3 w-[13px] flex-col border-l border-[#999]"><span className="h-1.5 border-b border-[#999]" /></span>
              <span className="ml-[9px] font-['Liberation_Serif',serif] text-[9px] leading-[11px]">Horizontale Linie</span>
            </li>
            <li className="flex flex-1 pl-1.5">
              <span className="w-[13px] border-l border-[#999]" />
              <span className="border-l border-[#999]" />
            </li>
            {STYLES.map((s) => (
              <StyleRow key={s.name} style={s} selected={s.name === selected} onSelect={() => setSelected(s.name)} />
            ))}
            <li className="flex h-1.5 shrink-0 border-b border-dashed border-[#b8b8b8] pl-1.5"><span className="border-l border-[#999]" /></li>
          </ul>
          <div className="flex w-[11px] flex-col border-l border-[#999] bg-[#e4e4e4] pb-[22px] pt-[190px]">
            <div className="flex-1 rounded-full border border-[#999] bg-linear-to-r from-[#f0f0f0] to-[#c8c8c8]" />
          </div>
        </div>
        <label className="relative ml-2 flex h-7 shrink-0 items-center gap-1.5 text-[13px]">
          <input type="checkbox" defaultChecked className="peer sr-only" />
          <svg viewBox="0 0 14 14" className="size-3.5" aria-hidden="true">
            <rect x="0.500" y="0.500" width="13" height="13" rx="1.500" fill="#8fae6e" stroke={slate} />
            <path d="M4 4l6 6M10 4l-6 6" stroke="#fff" strokeWidth="2.400" />
          </svg>
          Vorschauen anzeigen
        </label>
        <Select label="Ansicht" options={['Hierarchisch']} className="mb-2 ml-2 h-[30px]" />
      </div>
      <nav className="flex w-[59px] flex-col items-center gap-3">
        <button aria-label="Einstellungen der Seitenleiste" className="-mb-[3px] flex size-[34px] shrink-0 items-center justify-center">
          <svg viewBox="0 0 10 10" className="size-2.5" aria-hidden="true"><path d="M0 1h10M0 5h10M0 9h10" stroke={ink} strokeWidth="2" /></svg>
        </button>
        {TABS.map(([icon, label]) => (
          <button key={icon} aria-label={label} className={clsx('flex size-[34px] shrink-0 items-center justify-center border', icon === 'stylesTab' ? pressedClass : 'border-transparent')}>
            <Icon name={icon} />
          </button>
        ))}
      </nav>
    </aside>
  )
}

const LEVELS = ['1', '2', '3', '4', '5', '6', '7', '8', '9', '10', '1 - 10']

const Spin = ({ id }) => {
  const [value, setValue] = useState(1)
  return (
    <div className="flex h-[30px] flex-1 rounded-xs border border-[#999] bg-linear-to-b from-[#e4e4e4] to-[#f7f7f7]">
      <input id={id} value={value} onChange={(e) => setValue(Number(e.target.value) || 0)} className="min-w-0 flex-1 px-1 text-[13px] outline-none" />
      <button aria-label="Verringern" onClick={() => setValue(value - 1)} className="flex w-[26px] items-center justify-center border-l border-[#999] bg-linear-to-b from-[#f7f7f7] to-[#d3d3d3]">
        <svg viewBox="0 0 10 10" className="size-2.5" aria-hidden="true"><path d="M0 5h10" stroke={ink} strokeWidth="2" /></svg>
      </button>
      <button aria-label="Erhöhen" onClick={() => setValue(value + 1)} className="flex w-[26px] items-center justify-center border-l border-[#999] bg-linear-to-b from-[#f7f7f7] to-[#d3d3d3]">
        <svg viewBox="0 0 10 10" className="size-2.5" aria-hidden="true"><path d="M0 5h10M5 0v10" stroke={ink} strokeWidth="2" /></svg>
      </button>
    </div>
  )
}

const Field = ({ id, label, wide, children }) => (
  <div className="flex items-center pl-3">
    <label htmlFor={id} className={clsx('shrink-0', wide ? 'w-[106px]' : 'w-[60px]')}>{label}</label>
    {children}
  </div>
)

const DialogButton = ({ children, className }) => (
  <button className={clsx('flex h-8 items-center justify-center gap-2.5 rounded-xs border bg-linear-to-b from-[#f7f7f7] to-[#d0d0d0]', className)}>
    {children}
  </button>
)

const ChapterDialog = () => {
  const [level, setLevel] = useState('4')
  return (
    <div
      role="dialog"
      aria-label="Kapitelnummerierung"
      className="absolute right-[71px] top-[201px] flex w-[715px] flex-col rounded-t-md border border-[#8e8e8e] bg-[#d6d6d6] text-[13px] shadow-[2px_4px_14px_rgba(0,0,0,0.5)]"
    >
      <header className="relative flex h-[26px] items-center justify-center rounded-t-md bg-linear-to-b from-[#efefef] to-[#d6d6d6] text-[#6a6a72]">
        Kapitelnummerierung
        <button aria-label="Schließen" className="absolute right-3.5 top-2">
          <svg viewBox="0 0 8 8" className="size-2" aria-hidden="true"><path d="M1 1l6 6M7 1L1 7" stroke="#8e8e8e" strokeWidth="1.800" /></svg>
        </button>
      </header>
      <div className="mt-[7px] px-3">
        <div role="tablist" className="flex gap-0.5">
          <button role="tab" aria-selected="true" className="relative -mb-px h-[26px] w-[113px] rounded-t-sm border border-b-0 border-[#999] bg-[#ebebeb]">Nummerierung</button>
          <button role="tab" aria-selected="false" className="h-[25px] w-[71px] rounded-t-sm border border-b-0 border-[#999] bg-linear-to-b from-[#dedede] to-[#d0d0d0]">Position</button>
        </div>
        <div className="flex h-[309px] border border-[#999] bg-[#ebebeb] pb-1.5 pl-1.5 pr-1.5">
          <section className="flex w-[74px] flex-col">
            <h3 className="h-7 shrink-0 font-bold leading-7">Ebene</h3>
            <ul className="ml-3 w-[50px] flex-1 border border-[#999] bg-[#f7f7f7]">
              {LEVELS.map((l) => (
                <li
                  key={l}
                  onClick={() => setLevel(l)}
                  className={clsx('h-[22px] pl-1 leading-[22px]', l === level && 'bg-[#8fae6e] text-[#f7f7f7]')}
                >
                  {l}
                </li>
              ))}
            </ul>
          </section>
          <section className="flex flex-1 flex-col">
            <h3 className="h-7 shrink-0 font-bold leading-7">Nummerierung</h3>
            <div className="flex flex-col gap-1.5">
              <Field id="number" label="Nummer:" wide>
                <Select id="number" options={['Keine', '1, 2, 3, ...', 'A, B, C, ...']} className="h-[35px] flex-1" />
              </Field>
              <Field id="start" label="Beginnen mit:" wide><Spin id="start" /></Field>
              <Field id="para" label="Absatzvorlage:" wide>
                <Select id="para" options={['Überschrift 4']} className="h-[30px] flex-1" />
              </Field>
              <Field id="char" label="Zeichenvorlage:" wide>
                <Select id="char" options={['Keine']} className="h-[30px] flex-1" />
              </Field>
              <Field id="complete" label="Vollständig:" wide><Spin id="complete" /></Field>
            </div>
            <h3 className="h-7 shrink-0 font-bold leading-7">Trenner</h3>
            <div className="flex flex-col gap-1.5">
              <Field id="before" label="Davor:">
                <input id="before" className="h-[30px] min-w-0 flex-1 rounded-xs border border-[#999] bg-linear-to-b from-[#e4e4e4] to-[#f7f7f7] px-1" />
              </Field>
              <Field id="after" label="Danach:">
                <input id="after" className="h-[30px] min-w-0 flex-1 rounded-xs border border-[#999] bg-linear-to-b from-[#e4e4e4] to-[#f7f7f7] px-1" />
              </Field>
            </div>
          </section>
          <section className="ml-3 flex w-[195px] flex-col">
            <h3 className="h-7 shrink-0 font-bold leading-7">Vorschau</h3>
            <ul className="ml-3 flex-1 border border-[#c4c4c4] bg-white pl-[7px]">
              {Array.from({ length: 10 }, (_, i) => (
                <li key={i} className="text-[14px] leading-[26px]">Überschrift {i + 1}</li>
              ))}
            </ul>
          </section>
        </div>
      </div>
      <footer className="flex gap-1.5 px-[18px] pb-[18px] pt-[18px]">
        <DialogButton className="mr-1 w-[122px] border-[#a0a0a0]">Hilfe</DialogButton>
        <DialogButton className="flex-1 border-[#a0a0a0]">Laden/Speichern <Caret /></DialogButton>
        <DialogButton className="w-[122px] border-[#a0a0a0]">Zurücksetzen</DialogButton>
        <DialogButton className="w-[122px] border-[#a0a0a0]">Abbrechen</DialogButton>
        <DialogButton className="w-[122px] border-2 border-[#8fae6e]">OK</DialogButton>
      </footer>
    </div>
  )
}

const StatusBar = () => (
  <footer className="flex h-[23px] shrink-0 items-center border-b border-t border-b-[#2b2b2b] border-t-[#999] pl-[5px] text-[12px]">
    <svg viewBox="0 0 14 14" className="size-3.5 shrink-0" aria-hidden="true">
      <path d="M9.500 2.500V1.500h-8v10h8V9.500" fill="none" stroke="#85858d" />
      <path d="M9.500 3.500v5M7.300 4.700l4.400 2.600M11.700 4.700L7.300 7.300" stroke="#a0561c" strokeWidth="1.300" />
    </svg>
    <span className="ml-3.5 w-[122px] shrink-0">Seite 1 von 1</span>
    <span className="w-[205px] shrink-0">0 Wörter, 0 Zeichen</span>
    <span className="w-[117px] shrink-0">Standard</span>
    <span className="w-[225px] shrink-0">Deutsch (Deutschland)</span>
    <svg viewBox="0 0 16 12" className="h-3 w-4 shrink-0" aria-hidden="true">
      <path d="M0.500 3.500h8v5h-8z" fill="none" stroke="#3f7cb8" />
      <path d="M10 1.500h5M12.500 1.500v9M10 10.500h5" stroke={ink} />
    </svg>
    <span className="ml-[61px] shrink-0">Kapitelnummerierung : Ebene 4</span>
    <svg viewBox="0 0 56 12" className="ml-auto h-3 w-14 shrink-0" fill="none" stroke="#8e8e96" aria-hidden="true">
      <path d="M1.500 1.500h4l3 3v6h-7zM5.500 1.500v3h3" />
      <path d="M14.500 1.500h4l3 3v6h-7zM18.500 1.500v3h3M23.500 1.500h4l3 3v6h-7zM27.500 1.500v3h3" stroke={slate} />
      <path d="M47.500 10.500h-8v-6l3-3h5zM42.500 1.500v3h-3M47.500 1.500h4l3 3v6h-7zM51.500 1.500v3h3" />
    </svg>
    <button aria-label="Verkleinern" className="ml-[19px] shrink-0">
      <svg viewBox="0 0 8 8" className="size-2" aria-hidden="true"><path d="M0 4h8" stroke="#85858d" strokeWidth="2" /></svg>
    </button>
    <div className="relative ml-1.5 h-3 w-[97px] shrink-0">
      <input type="range" aria-label="Maßstab" min="20" max="600" defaultValue="213" className="absolute inset-0 size-full opacity-0" />
      <svg viewBox="0 0 97 12" className="pointer-events-none h-3 w-[97px]" aria-hidden="true">
        <path d="M0 6h97M38 3v6M48 3v6" stroke={ink} strokeWidth="1.500" />
        <circle cx="58" cy="6" r="4" fill="#fff" stroke="#85858d" />
      </svg>
    </div>
    <button aria-label="Vergrößern" className="ml-1.5 shrink-0">
      <svg viewBox="0 0 8 8" className="size-2" aria-hidden="true"><path d="M0 4h8M4 0v8" stroke="#85858d" strokeWidth="1.500" /></svg>
    </button>
    <span className="ml-[15px] w-[43px] shrink-0">213 %</span>
  </footer>
)

// red frames and arrow that link the toolbar button to the dialog field
const Callout = () => (
  <svg viewBox="0 0 1247 400" className="pointer-events-none absolute right-0 top-0 h-[400px] w-[1247px]" aria-hidden="true">
    <g fill="none" stroke="#fe0000" strokeWidth="4" strokeLinejoin="round">
      <rect x="1171" y="77" width="46" height="40" />
      <rect x="555" y="289" width="114" height="37" />
      <path d="M733 281L1128 127" strokeWidth="5" />
      <path d="M1122 113l35 4-24 25zM705 291l22-26 10 29z" fill="#fff" />
    </g>
  </svg>
)

const App = () => (
  <div className="relative flex h-screen min-h-[1100px] flex-col overflow-hidden bg-[#d6d6d6] font-['Open_Sans','Noto_Sans',sans-serif] text-[13px] text-[#2b2b2b]">
    <div className="flex h-3 shrink-0 items-end justify-center overflow-hidden pb-1">
      <span className="text-[13px] font-semibold leading-[14px] text-[#aaa]">Unbenannt 1 - LibreOffice Writer</span>
      <svg viewBox="0 0 50 6" className="absolute right-3.5 top-0 h-1.5 w-[50px]" aria-hidden="true">
        <path d="M1 2h7M44 4l3-4 3 4" fill="none" stroke="#999" strokeWidth="1.500" />
        <path d="M22 1h7l-3.500 3z" fill="#999" />
      </svg>
    </div>
    <nav className="flex h-6 shrink-0 items-center gap-3.5 pl-px">
      {MENU.map((m) => <button key={m} className="shrink-0">{m}</button>)}
    </nav>
    <div className="-ml-[3px] flex h-[38px] shrink-0 items-center">
      {STANDARD_BAR.map((item, i) => <Tool key={i} item={item} />)}
      <Chevrons />
    </div>
    <div className="-ml-0.5 flex h-10 shrink-0 items-center">
      <Tool item={{ icon: 'chapter', label: 'Formatvorlagen anzeigen' }} />
      <span className="w-2 shrink-0" />
      <Combo label="Absatzvorlage" value="Überschrift 4" className="mr-2 w-[168px]" />
      <Combo label="Schriftname" value="Liberation Sans" className="mr-2 w-[184px]" />
      <Combo label="Schriftgröße" value="13 pt" className="w-[89px]" />
      {FORMAT_BAR.map((item, i) => <Tool key={i} item={item} />)}
      <Chevrons />
    </div>
    <main className="flex min-h-0 flex-1">
      <div className="flex min-w-0 flex-1 flex-col">
        <HorizontalRuler />
        <div className="ml-[18px] mt-5 h-1.5 shrink-0 border-b-2 border-[#b0b0b0] bg-linear-to-b from-[#d6d6d6] to-[#c8c8c8]" />
        <div className="flex min-h-0 flex-1">
          <VerticalRuler />
          <div className="ml-1 flex min-w-0 flex-1 bg-white pl-[31px] pr-7 pt-[87px]">
            <div className="flex-1 border-x border-t border-[#cfcfcf] pl-px pt-2.5">
              <p className="font-['Liberation_Sans',sans-serif] text-[20px] leading-6 text-[#3f7cb8]">¶</p>
            </div>
          </div>
        </div>
        <div className="flex h-2.5 shrink-0 border-t border-[#999] bg-[#e8e8e8] pl-16 pr-[73px]">
          <div className="flex-1 rounded-full border border-t-0 border-[#999] bg-linear-to-b from-[#ededed] to-[#cfcfcf]" />
        </div>
      </div>
      <div className="w-2.5 shrink-0 border-x border-[#999] bg-[#e8e8e8] pb-[296px]">
        <div className="h-full rounded-full border-b border-t border-[#999] bg-linear-to-r from-[#ededed] to-[#cfcfcf]" />
      </div>
      <Sidebar />
    </main>
    <StatusBar />
    <ChapterDialog />
    <Callout />
  </div>
)

export default App
